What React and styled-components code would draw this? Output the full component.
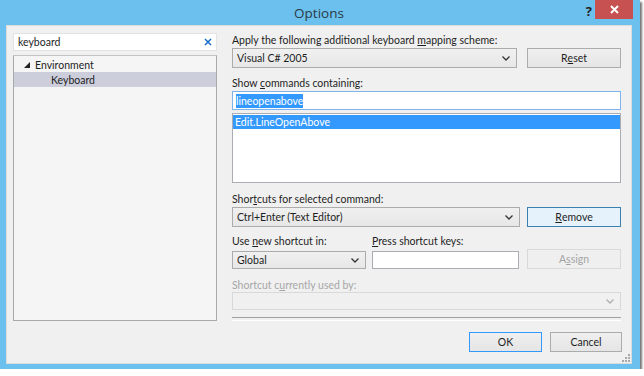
import React from 'react';
import styled, { createGlobalStyle } from 'styled-components';

const GlobalStyle = createGlobalStyle`
  body {
    margin: 0;
    background: #fff;
    font-family: Lato, "Open Sans", sans-serif;
    font-size: 10.5px;
    color: #1e1e1e;
  }
`;

const Window = styled.div`
  width: 640px;
  height: 369px;
  background: #6bc0ed;
  box-shadow: 2px 2px 2px rgba(0, 0, 0, 0.55);
  display: flex;
  flex-direction: column;
  box-sizing: border-box;
  padding: 0 8px 5px 6px;
`;

const TitleBar = styled.div`
  height: 25px;
  position: relative;
  display: flex;
  align-items: center;
  justify-content: center;
  font-family: "Open Sans", sans-serif;
  font-size: 13.5px;
  color: #2b3a44;
  padding-top: 1px;
  box-sizing: border-box;
`;

const Help = styled.span`
  position: absolute;
  right: 40px;
  top: 2px;
  font-size: 13px;
  font-weight: bold;
  color: #222;
`;

const Close = styled.div`
  position: absolute;
  right: -1px;
  top: 0;
  width: 38px;
  height: 19px;
  background: #c75050;
  display: flex;
  align-items: center;
  justify-content: center;
`;

const Client = styled.div`
  flex: 1;
  background: #f0f0f0;
  border: 1px solid #dcdcdc;
  display: flex;
  flex-direction: column;
  position: relative;
  padding: 7px 0 0 6px;
`;

const Body = styled.div`
  display: flex;
  align-items: flex-start;
  gap: 15px;
`;

const LeftCol = styled.div`
  width: 204px;
  display: flex;
  flex-direction: column;
  gap: 4px;
`;

const Search = styled.div`
  height: 18px;
  background: #fff;
  border: 1px solid #e3e3e3;
  box-sizing: border-box;
  display: flex;
  align-items: center;
  justify-content: space-between;
  padding: 0 4px 0 4px;
`;

const Tree = styled.div`
  height: 266px;
  background: #f5f5f5;
  border: 1px solid #a9a9a9;
  border-top-color: #c4c4c4;
  box-sizing: border-box;
  padding-top: 1px;
`;

const TreeRow = styled.div`
  height: 15px;
  display: flex;
  align-items: center;
  padding-left: ${p => p.$indent}px;
  background: ${p => (p.$selected ? '#cccedb' : 'transparent')};
  gap: 5px;
`;

const RightCol = styled.div`
  width: 389px;
  display: flex;
  flex-direction: column;
`;

const Label = styled.div`
  height: 14px;
  line-height: 14px;
  color: ${p => (p.$disabled ? '#a7a7a7' : '#1e1e1e')};
  margin-top: ${p => p.$top || 0}px;
  margin-bottom: ${p => p.$bottom ?? 2}px;
`;

const Row = styled.div`
  display: flex;
  align-items: flex-end;
  gap: ${p => p.$gap || 10}px;
`;

const Combo = styled.div`
  width: ${p => p.$w}px;
  height: ${p => p.$h || 20}px;
  box-sizing: border-box;
  border: 1px solid ${p => (p.$disabled ? '#d9d9d9' : '#acacac')};
  background: ${p => (p.$disabled ? '#f0f0f0' : 'linear-gradient(#f0f0f0, #e7e7e7)')};
  display: flex;
  align-items: center;
  justify-content: space-between;
  padding: 0 6px 0 4px;
`;

const Button = styled.div`
  width: ${p => p.$w || 94}px;
  height: 20px;
  box-sizing: border-box;
  border: 1px solid ${p => p.$border || '#acacac'};
  background: ${p => p.$bg || 'linear-gradient(#efefef, #e5e5e5)'};
  color: ${p => (p.$disabled ? '#a3a3a3' : '#1e1e1e')};
  display: flex;
  align-items: center;
  justify-content: center;
`;

const TextBox = styled.div`
  width: ${p => p.$w}px;
  height: ${p => p.$h || 19}px;
  box-sizing: border-box;
  background: #fff;
  border: 1px solid ${p => p.$focus ? '#7eb4ea' : '#abadb3'};
  display: flex;
  align-items: center;
  padding: 0 3px;
`;

const Selection = styled.span`
  background: #3399ff;
  color: #fff;
  line-height: 14px;
`;

const ListBox = styled.div`
  height: 70px;
  box-sizing: border-box;
  background: #fff;
  border: 1px solid #abadb3;
  margin-top: 3px;
  padding: 1px 0 0 0;
`;

const ListItem = styled.div`
  height: 14px;
  line-height: 14px;
  background: #3399ff;
  color: #fff;
  padding-left: 2px;
`;

const Separator = styled.div`
  height: 2px;
  margin-top: 7px;
  border-top: 1px solid #a0a0a0;
  border-bottom: 1px solid #fff;
`;

const Footer = styled.div`
  display: flex;
  justify-content: flex-end;
  gap: 8px;
  padding-right: 9px;
  margin-top: 11px;
`;

const Grip = styled.svg`
  position: absolute;
  right: 1px;
  bottom: 1px;
`;

const Chevron = ({ color = '#333' }) => (
  <svg width="8" height="5" viewBox="0 0 8 5">
    <path d="M0.5 0.5 L4 4 L7.5 0.5" fill="none" stroke={color} strokeWidth="1.3" />
  </svg>
);

export default function App() {
  return (
    <>
      <GlobalStyle />
      <Window>
        <TitleBar>
          Options
          <Help>?</Help>
          <Close>
            <svg width="9" height="9" viewBox="0 0 9 9">
              <path d="M1 1 L8 8 M8 1 L1 8" stroke="#fff" strokeWidth="2" />
            </svg>
          </Close>
        </TitleBar>
        <Client>
          <Body>
            <LeftCol>
              <Search>
                keyboard
                <svg width="8" height="8" viewBox="0 0 8 8">
                  <path d="M1 1 L7 7 M7 1 L1 7" stroke="#1c6fc9" strokeWidth="1.6" />
                </svg>
              </Search>
              <Tree>
                <TreeRow $indent={10}>
                  <svg width="6" height="6" viewBox="0 0 6 6">
                    <polygon points="6,0 6,6 0,6" fill="#222" />
                  </svg>
                  Environment
                </TreeRow>
                <TreeRow $indent={37} $selected>Keyboard</TreeRow>
              </Tree>
            </LeftCol>
            <RightCol>
              <Label $bottom={1}>Apply the following additional keyboard <u>m</u>apping scheme:</Label>
              <Row>
                <Combo $w={285}>Visual C# 2005<Chevron /></Combo>
                <Button>R<u>e</u>set</Button>
              </Row>
              <Label $top={8} $bottom={1}>Show <u>c</u>ommands containing:</Label>
              <TextBox $w={389} $focus>
                <Selection>lineopenabove</Selection>
              </TextBox>
              <ListBox>
                <ListItem>Edit.LineOpenAbove</ListItem>
              </ListBox>
              <Label $top={9} $bottom={1}>Shor<u>t</u>cuts for selected command:</Label>
              <Row $gap={7}>
                <Combo $w={288}>Ctrl+Enter (Text Editor)<Chevron /></Combo>
                <Button $bg="#e5f1fb" $border="#3c7fb1"><u>R</u>emove</Button>
              </Row>
              <Row $gap={6}>
                <div>
                  <Label $top={7} $bottom={3}>Use <u>n</u>ew shortcut in:</Label>
                  <Combo $w={134} $h={18}>Global<Chevron /></Combo>
                </div>
                <div>
                  <Label $top={7} $bottom={3}><u>P</u>ress shortcut keys:</Label>
                  <TextBox $w={147} $h={18} />
                </div>
                <Button $disabled $bg="#efefef" $border="#d9d9d9" style={{ marginLeft: 2 }}>
                  A<u>s</u>sign
                </Button>
              </Row>
              <Label $disabled $top={9} $bottom={0}>Shortcut c<u>u</u>rrently used by:</Label>
              <Combo $w={389} $h={18} $disabled>
                <span />
                <Chevron color="#b0b0b0" />
              </Combo>
              <Separator />
            </RightCol>
          </Body>
          <Footer>
            <Button $w={73} $border="#3399ff">OK</Button>
            <Button $w={72}>Cancel</Button>
          </Footer>
          <Grip width="8" height="8" viewBox="0 0 8 8">
            <g fill="#a8a8a8">
              <rect x="6" y="0" width="2" height="2" />
              <rect x="3" y="3" width="2" height="2" />
              <rect x="6" y="3" width="2" height="2" />
              <rect x="0" y="6" width="2" height="2" />
              <rect x="3" y="6" width="2" height="2" />
              <rect x="6" y="6" width="2" height="2" />
            </g>
          </Grip>
        </Client>
      </Window>
    </>
  );
}
